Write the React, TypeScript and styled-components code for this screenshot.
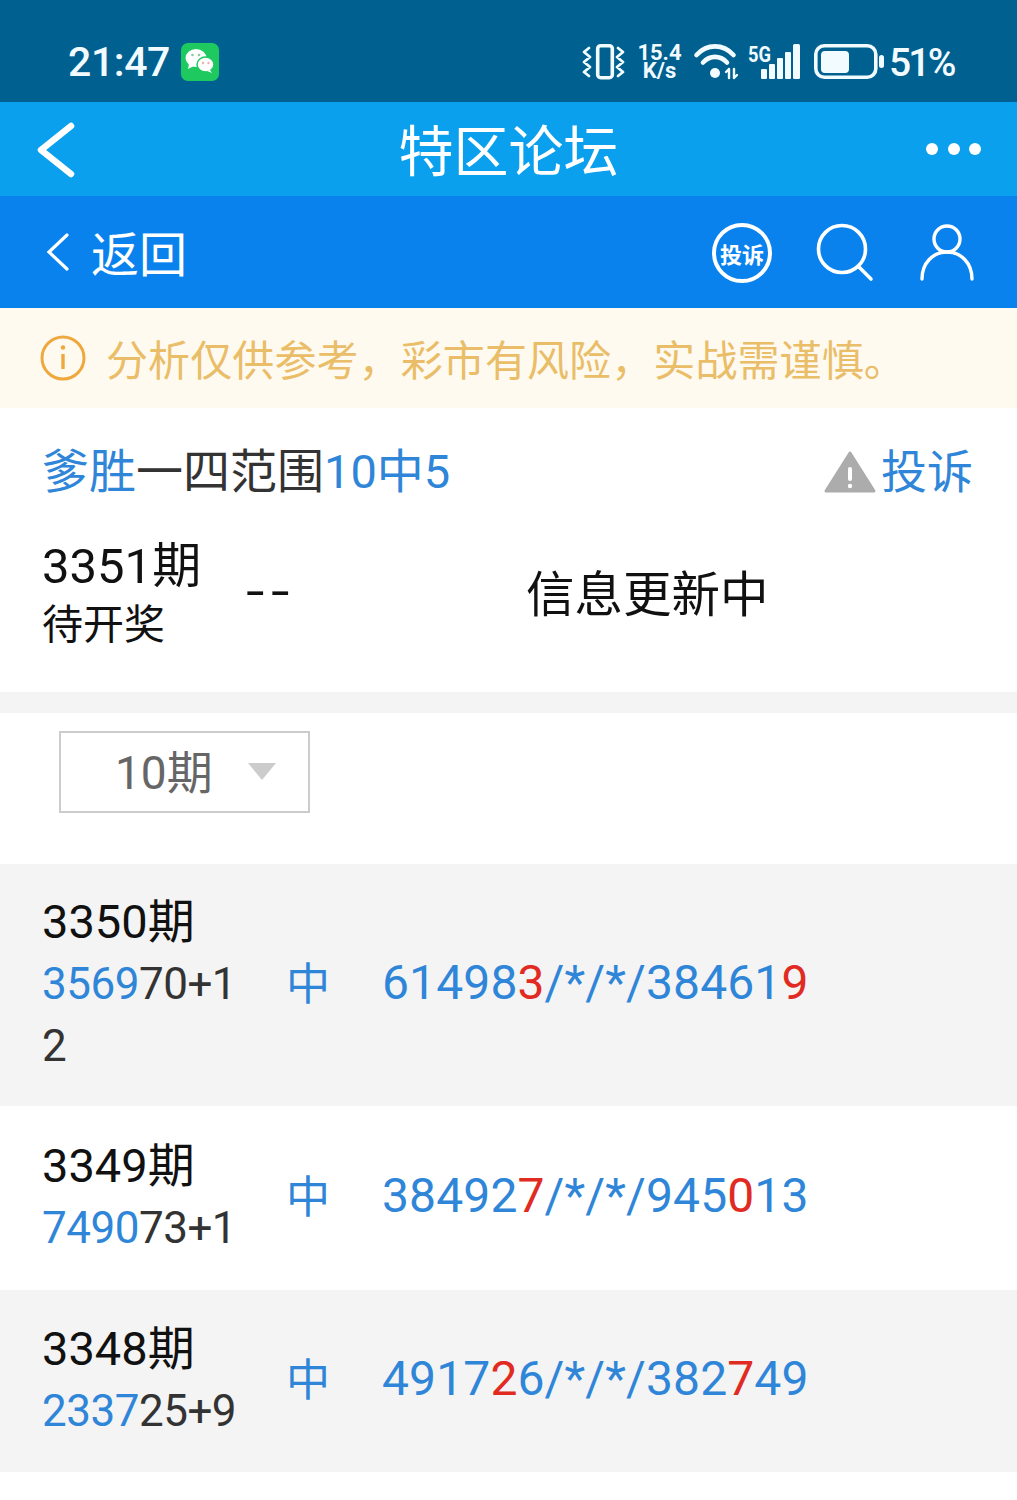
import React from "react";
import styled, { createGlobalStyle } from "styled-components";

const Global = createGlobalStyle`
  html, body { margin: 0; padding: 0; background: #fff; }
  body { font-family: Roboto, "Noto Sans CJK SC", sans-serif; }
`;
const Page = styled.div`width: 1017px; height: 1500px; overflow: hidden; background: #fff;`;

const StatusBar = styled.div`
  height: 102px; background: #00608f; color: #f2fbff; display: flex; align-items: center;
  justify-content: space-between; padding: 22px 62px 0 68px; box-sizing: border-box;
`;
const StatusLeft = styled.div`display: flex; align-items: center; gap: 11px;`;
const StatusRight = styled.div`display: flex; align-items: center;`;
const Clock = styled.span`font: 500 41px/1 Roboto, sans-serif; letter-spacing: -0.4px;`;
const Pct = styled.span`font: 500 39px/1 Roboto, sans-serif; margin: 2px 0 0 4px; letter-spacing: -2.8px; width: 66px; white-space: nowrap;`;
const Speed = styled.div`
  display: flex; flex-direction: column; align-items: center; font: 700 22px/18px Roboto, sans-serif;
  width: 45px; margin: 0 11px;
`;
const SignalIcon = styled.svg`margin-left: 8px;`;
const BatteryIcon = styled.svg`margin-left: 13px;`;

const AppHeader = styled.div`
  height: 94px; background: #0aa0ee; color: #fff; display: flex; align-items: center;
  justify-content: space-between; padding: 0 36px 0 35px; box-sizing: border-box; position: relative;
`;
const AppTitle = styled.div`
  position: absolute; left: 0; right: 0; top: 0; text-align: center; font: 400 55px/90px "Noto Sans CJK SC", sans-serif;
`;
const Dots = styled.div`display: flex; gap: 9.5px;`;
const Dot = styled.span`width: 12px; height: 12px; border-radius: 50%; background: #fff;`;

const SubNav = styled.div`
  height: 112px; background: #0a82ee; color: #fff; display: flex; align-items: center;
  padding: 0 43px 0 46px; box-sizing: border-box;
`;
const Back = styled.div`display: flex; align-items: center; gap: 21px; font: 400 48px/1 Roboto, "Noto Sans CJK SC", sans-serif; flex: 1;`;
const BackLabel = styled.span`padding-top: 8px;`;
const NavIcons = styled.div`display: flex; align-items: center; gap: 46px; margin-top: 1px;`;
const Badge = styled.div`
  width: 60px; height: 60px; box-sizing: border-box; border: 4px solid #fff; border-radius: 50%; margin-right: -2px;
  display: flex; align-items: center; justify-content: center; font: 700 22px/1 "Noto Sans CJK SC", sans-serif;
`;

const Notice = styled.div`
  height: 100px; background: #fffaf0; display: flex; align-items: center; padding: 0 0 0 40px; box-sizing: border-box;
  color: #eabd68; font: 400 42px/1 "Noto Sans CJK SC", sans-serif; gap: 20px; white-space: nowrap; letter-spacing: 0.1px;
`;

const Section = styled.div`height: 284px; box-sizing: border-box; padding: 36px 44px 0 42px;`;
const TitleRow = styled.div`display: flex; justify-content: space-between; align-items: center; height: 56px;`;
const Heading = styled.div`font: 400 47px/56px Roboto, "Noto Sans CJK SC", sans-serif; color: #333;`;
const Blue = styled.span`color: #2f86d8;`;
const Red = styled.span`color: #e02a22;`;
const Report = styled.div`display: flex; align-items: center; gap: 5px; color: #2f86d8; font: 400 46px/56px Roboto, "Noto Sans CJK SC", sans-serif;`;
const DrawRow = styled.div`display: flex; align-items: center; margin-top: 38px;`;
const DrawLeft = styled.div`width: 203px; color: #111;`;
const DrawNo = styled.div`font: 400 49px/58px Roboto, "Noto Sans CJK SC", sans-serif;`;
const DrawState = styled.div`font: 400 41px/58px Roboto, "Noto Sans CJK SC", sans-serif;`;
const Dash = styled.div`
  font: 400 46px/1 "Liberation Mono", monospace; width: 282px; color: #111; margin-top: -4px; letter-spacing: -7.600px;
  transform: scaleX(1.25); transform-origin: left center; text-indent: -5.600px;
`;
const Updating = styled.div`font: 400 48.5px/1 Roboto, "Noto Sans CJK SC", sans-serif; color: #111; margin-left: -1px;`;

const Divider = styled.div`height: 21px; background: #f4f4f4;`;
const Filter = styled.div`height: 151px; box-sizing: border-box; padding: 18px 0 0 59px;`;
const Select = styled.div`
  width: 251px; height: 82px; box-sizing: border-box; border: 2px solid #ccc; display: flex; align-items: center;
  padding: 2px 0 0 54px; gap: 35px; color: #666; font: 400 46px/1 Roboto, "Noto Sans CJK SC", sans-serif;
`;
const Caret = styled.span`
  border-left: 14px solid transparent; border-right: 14px solid transparent; border-top: 17px solid #ccc; margin-top: -3px;
`;

const Row = styled.div<{ $shade?: boolean; $h: number }>`
  height: ${p => p.$h}px; box-sizing: border-box; background: ${p => (p.$shade ? "#f4f4f4" : "#fff")};
  display: flex; align-items: center; padding: 0 0 0 42px;
`;
const RowLeft = styled.div`width: 197px; color: #333; margin-top: -3px;`;
const RowNo = styled.div`font: 400 47px/62px Roboto, "Noto Sans CJK SC", sans-serif; color: #111;`;
const RowSum = styled.div`font: 400 44px/62px Roboto, sans-serif; word-break: break-all; letter-spacing: -0.5px;`;
const Hit = styled.div`width: 96px; margin: -8px 0 0 47px; color: #2f86d8; font: 400 44px/1 "Noto Sans CJK SC", sans-serif;`;
const Nums = styled.div`color: #2f86d8; font: 400 48px/1 Roboto, sans-serif; letter-spacing: 0.12px; margin-top: -4px; white-space: nowrap;`;

const rows = [
  { h: 242, shade: true, no: "3350期", a: "3569", b: "70+12", hit: [<Blue key="a">61498</Blue>, <Red key="b">3</Red>, "/*/*/38461", <Red key="c">9</Red>] },
  { h: 184, shade: false, no: "3349期", a: "7490", b: "73+1", hit: [<Blue key="a">38492</Blue>, <Red key="b">7</Red>, "/*/*/945", <Red key="c">0</Red>, "13"] },
  { h: 182, shade: true, no: "3348期", a: "2337", b: "25+9", hit: ["4917", <Red key="b">2</Red>, "6/*/*/382", <Red key="c">7</Red>, "49"] },
];

export default function App() {
  return (
    <Page>
      <Global />
      <StatusBar>
        <StatusLeft>
          <Clock>21:47</Clock>
          <svg width="38" height="38" viewBox="0 0 38 38">
            <rect width="38" height="38" rx="7" fill="#1ec95f" />
            <ellipse cx="15" cy="15" rx="10.5" ry="9" fill="#fff" />
            <path d="M8 21l-1 5 6-3z" fill="#fff" />
            <ellipse cx="24.5" cy="21.5" rx="8.5" ry="7.5" fill="#fff" stroke="#1ec95f" strokeWidth="1.5" />
            <path d="M29 27l2 3-5-2z" fill="#fff" />
            <circle cx="11.5" cy="12" r="1.3" fill="#8bc9a0" /><circle cx="18" cy="12" r="1.3" fill="#8bc9a0" />
            <circle cx="22" cy="20" r="1.2" fill="#eeb0b0" /><circle cx="27.5" cy="20" r="1.2" fill="#eeb0b0" />
          </svg>
        </StatusLeft>
        <StatusRight>
          <svg width="45" height="40" viewBox="0 0 45 40" fill="none" stroke="#f2fbff" strokeLinecap="round" strokeLinejoin="round">
            <rect x="16.7" y="3.7" width="14.6" height="32" rx="3" strokeWidth="3.6" />
            <path d="M8 6l-5 4 6 5-6 5 6 5-6 5 5 4M37 6l5 4-6 5 6 5-6 5 6 5-5 4" strokeWidth="2.8" />
          </svg>
          <Speed><span>15.4</span><span>K/s</span></Speed>
          <svg width="46" height="40" viewBox="0 0 46 40" fill="none" stroke="#f2fbff" strokeLinecap="round">
            <path d="M3.500 13C14 1.500 30 1.500 40.500 13M10 20.500C17 13 27 13 34 20.500" strokeWidth="4.6" />
            <circle cx="22" cy="31" r="5" fill="#f2fbff" stroke="none" />
            <path d="M36 27v9M33 30l3-3M41 27v9M41 36l3-3" strokeWidth="2.4" />
          </svg>
          <SignalIcon width="54" height="40" viewBox="0 0 54 40">
            <text x="1" y="20" fontFamily="Roboto, sans-serif" fontWeight="700" fontSize="22" fill="#f2fbff" textLength="23" lengthAdjust="spacingAndGlyphs">5G</text>
            <g fill="#f2fbff">
              <rect x="14" y="27" width="6" height="10" rx="1" />
              <rect x="22" y="22" width="6" height="15" rx="1" />
              <rect x="30" y="16" width="6" height="21" rx="1" />
              <rect x="38" y="10" width="6" height="27" rx="1" />
              <rect x="46" y="2" width="7" height="35" rx="1.500" />
            </g>
          </SignalIcon>
          <BatteryIcon width="71" height="40" viewBox="0 0 71 40">
            <rect x="1.800" y="3.800" width="60" height="31.500" rx="8.500" fill="none" stroke="#f2fbff" strokeWidth="3.600" />
            <rect x="7" y="9" width="28" height="22" rx="4" fill="#f2fbff" />
            <rect x="65" y="13" width="5" height="13" rx="2.500" fill="#f2fbff" />
          </BatteryIcon>
          <Pct>51%</Pct>
        </StatusRight>
      </StatusBar>

      <AppHeader>
        <svg width="44" height="62" viewBox="0 0 44 62" fill="none" stroke="#fff" strokeWidth="6.500" strokeLinecap="round" strokeLinejoin="round">
          <path d="M36 8L6 32l30 24" />
        </svg>
        <AppTitle>特区论坛</AppTitle>
        <Dots><Dot /><Dot /><Dot /></Dots>
      </AppHeader>

      <SubNav>
        <Back>
          <svg width="24" height="40" viewBox="0 0 24 40" fill="none" stroke="#fff" strokeWidth="3.200" strokeLinecap="round">
            <path d="M21 3L3 20l18 17" />
          </svg>
          <BackLabel>返回</BackLabel>
        </Back>
        <NavIcons>
          <Badge>投诉</Badge>
          <svg width="58" height="60" viewBox="0 0 58 60" fill="none" stroke="#fff" strokeWidth="3.600" strokeLinecap="round">
            <circle cx="26" cy="26" r="23.500" />
            <path d="M43 44l12 12" />
          </svg>
          <svg width="54" height="58" viewBox="0 0 54 58" fill="none" stroke="#fff" strokeWidth="3.400" strokeLinecap="round">
            <circle cx="27" cy="15" r="13" />
            <path d="M2 55C2 39 13 28 27 28s25 11 25 27" />
          </svg>
        </NavIcons>
      </SubNav>

      <Notice>
        <svg width="46" height="46" viewBox="0 0 46 46" fill="none" stroke="#eea83e" strokeWidth="3">
          <circle cx="23" cy="23" r="21" />
          <path d="M23 19v15" strokeWidth="3.400" />
          <circle cx="23" cy="12.500" r="2.200" fill="#eea83e" stroke="none" />
        </svg>
        <span>分析仅供参考，彩市有风险，实战需谨慎。</span>
      </Notice>

      <Section>
        <TitleRow>
          <Heading><Blue>爹胜</Blue>一四范围<Blue>10中5</Blue></Heading>
          <Report>
            <svg width="52" height="44" viewBox="0 0 52 44">
              <path d="M26 3L50 41H2z" fill="#acacac" stroke="#acacac" strokeWidth="3" strokeLinejoin="round" />
              <rect x="24" y="17" width="4" height="14" rx="2" fill="#fff" />
              <circle cx="26" cy="36" r="2.200" fill="#fff" />
            </svg>
            <span>投诉</span>
          </Report>
        </TitleRow>
        <DrawRow>
          <DrawLeft>
            <DrawNo>3351期</DrawNo>
            <DrawState>待开奖</DrawState>
          </DrawLeft>
          <Dash>--</Dash>
          <Updating>信息更新中</Updating>
        </DrawRow>
      </Section>

      <Divider />
      <Filter>
        <Select>
          <span>10期</span>
          <Caret />
        </Select>
      </Filter>

      {rows.map(r => (
        <Row key={r.no} $shade={r.shade} $h={r.h}>
          <RowLeft>
            <RowNo>{r.no}</RowNo>
            <RowSum><Blue>{r.a}</Blue>{r.b}</RowSum>
          </RowLeft>
          <Hit>中</Hit>
          <Nums>{r.hit}</Nums>
        </Row>
      ))}
    </Page>
  );
}
